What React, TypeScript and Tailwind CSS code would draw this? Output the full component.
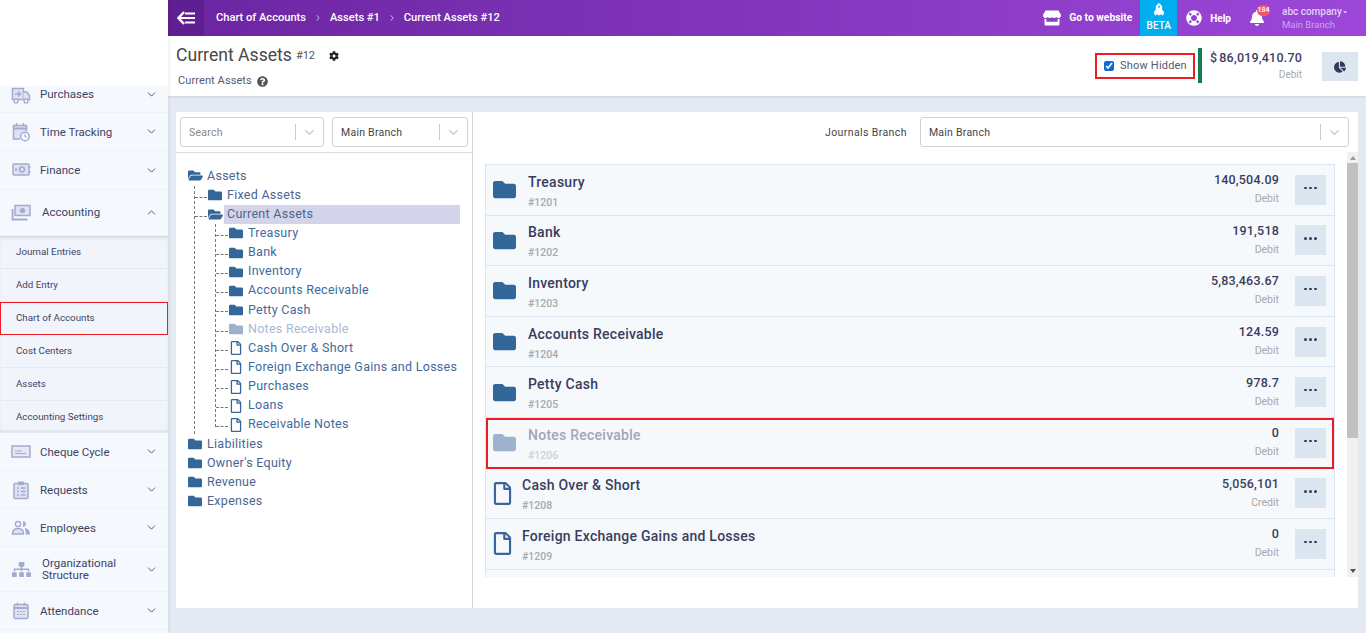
import { ChevronDown, ChevronUp, ChevronRight } from 'lucide-react'
import { FaFolder, FaFolderOpen, FaRegFile, FaCog, FaQuestionCircle, FaStore, FaRocket, FaLifeRing, FaBell, FaChartPie, FaCaretDown, FaSitemap } from 'react-icons/fa'

const iconColor = '#a3abd2'
const iconFill = '#dfe2f0'

function TruckIcon() {
  return (
    <svg width="20" height="20" viewBox="0 0 20 20" fill="none">
      <path d="M1.5 2.5h11v11h-11z" fill={iconFill} stroke={iconColor} strokeWidth="1.5" />
      <path d="M12.5 6h3.5l2.5 3.5v4h-6" fill={iconFill} stroke={iconColor} strokeWidth="1.5" />
      <path d="M4 8h5M7 5.5 9.5 8 7 10.5" stroke={iconColor} strokeWidth="1.3" />
      <circle cx="5" cy="15" r="1.9" fill="white" stroke={iconColor} strokeWidth="1.4" />
      <circle cx="15" cy="15" r="1.9" fill="white" stroke={iconColor} strokeWidth="1.4" />
    </svg>
  )
}

function CalendarClockIcon() {
  return (
    <svg width="20" height="20" viewBox="0 0 20 20" fill="none">
      <path d="M9 17H2.5V3.5h13V9" fill={iconFill} stroke={iconColor} strokeWidth="1.5" />
      <path d="M2.5 6.5h13" stroke={iconColor} strokeWidth="2" />
      <path d="M5.5 1v3.5M12.5 1v3.5" stroke={iconColor} strokeWidth="1.5" />
      <circle cx="14" cy="14.5" r="4.2" fill="white" stroke={iconColor} strokeWidth="1.5" />
      <path d="M14 12v2.7l2 .8" stroke={iconColor} strokeWidth="1.2" />
    </svg>
  )
}

function SafeIcon() {
  return (
    <svg width="20" height="20" viewBox="0 0 20 20" fill="none">
      <rect x="2" y="4" width="16" height="11" rx="1" fill={iconFill} stroke={iconColor} strokeWidth="1.5" />
      <circle cx="11" cy="9.5" r="2.5" stroke={iconColor} strokeWidth="1.5" />
      <path d="M5 8v3M18 7h1.5M18 12h1.5" stroke={iconColor} strokeWidth="1.5" />
    </svg>
  )
}

function MoneyIcon() {
  return (
    <svg width="20" height="20" viewBox="0 0 20 20" fill="none">
      <rect x="4" y="2.5" width="15" height="10" fill={iconFill} stroke={iconColor} strokeWidth="1.5" />
      <circle cx="11.5" cy="7.5" r="2.6" fill={iconColor} />
      <path d="M1.5 6v10.5h15" stroke={iconColor} strokeWidth="1.8" />
    </svg>
  )
}

function ChequeIcon() {
  return (
    <svg width="20" height="20" viewBox="0 0 20 20" fill="none">
      <rect x="1" y="4" width="18" height="11" fill="#e6e8f3" stroke={iconColor} strokeWidth="1.5" />
      <path d="M4 9h7M4 11.5h11" stroke={iconColor} strokeWidth="1" />
    </svg>
  )
}

function ClipboardIcon() {
  return (
    <svg width="20" height="20" viewBox="0 0 20 20" fill="none">
      <rect x="3" y="3.5" width="14" height="15" rx="1" fill={iconFill} stroke={iconColor} strokeWidth="1.5" />
      <rect x="7" y="1.5" width="6" height="3.5" rx="1" fill={iconColor} />
      <path d="M6 8h2M6 11.5h2M6 15h2M10 8h4.5M10 11.5h4.5M10 15h4.5" stroke={iconColor} strokeWidth="1.3" />
    </svg>
  )
}

function PeopleIcon() {
  return (
    <svg width="20" height="20" viewBox="0 0 20 20" fill="none">
      <circle cx="7" cy="6" r="2.6" fill="white" stroke={iconColor} strokeWidth="1.5" />
      <path d="M12.5 3.5a2.7 2.7 0 0 1 0 5.2z" fill={iconColor} stroke={iconColor} strokeWidth="1" />
      <path d="M1.5 16c0-3.6 2.4-5.5 5.5-5.5s5.5 1.9 5.5 5.5z" fill={iconFill} stroke={iconColor} strokeWidth="1.5" />
      <path d="M14 10.5c2.6.3 4.5 2.2 4.5 5.5H15" fill={iconColor} stroke={iconColor} strokeWidth="1" />
    </svg>
  )
}

function CalendarIcon() {
  return (
    <svg width="20" height="20" viewBox="0 0 20 20" fill="none">
      <rect x="3" y="3.5" width="14" height="14" rx="1.5" fill={iconFill} stroke={iconColor} strokeWidth="1.5" />
      <path d="M3 7h14" stroke={iconColor} strokeWidth="2" />
      <path d="M6.5 1.5v3M13.5 1.5v3" stroke={iconColor} strokeWidth="1.5" />
      <path d="M6 10.5h2M9 10.5h2M12 10.5h2M6 13.5h2M9 13.5h2M12 13.5h2" stroke={iconColor} strokeWidth="1.2" />
    </svg>
  )
}

function BackIcon() {
  return (
    <svg width="18" height="14" viewBox="0 0 18 14" fill="none">
      <path d="M7 1L1.5 7 7 13" stroke="white" strokeWidth="2.4" />
      <path d="M3 7h15M8 2.5h10M8 11.5h10" stroke="white" strokeWidth="2" />
    </svg>
  )
}

function SideRow({ icon, label, open, short, height }: { icon: React.ReactNode; label: React.ReactNode; open?: boolean; short?: boolean; height?: string }) {
  return (
    <div className={`flex border-b border-[#eef1f6] pl-[11px] pr-[10px] text-[11.5px] text-[#3d4267] ${short ? 'items-start overflow-hidden' : 'items-center'} ${height ?? 'h-[38px]'}`}>
      <span className="flex w-[20px] shrink-0 items-center justify-center">{icon}</span>
      <span className={`flex-1 leading-[12px] ${open ? 'ml-[11px] pb-[2px]' : 'ml-[9px]'} ${short ? 'mt-[2px]' : ''}`}>{label}</span>
      {open ? <ChevronUp size={13} strokeWidth={1.6} color="#3d4267" /> : <ChevronDown size={13} strokeWidth={1.6} color="#3d4267" className={short ? 'mt-[2px]' : ''} />}
    </div>
  )
}

const subItems = ['Journal Entries', 'Add Entry', 'Chart of Accounts', 'Cost Centers', 'Assets', 'Accounting Settings']

function Sidebar() {
  return (
    <aside className="z-10 flex h-full w-[168px] shrink-0 flex-col bg-[#f5f8fc] shadow-[1px_0_3px_rgba(0,0,0,0.08)]">
      <div className="h-[86px] shrink-0 bg-white" />
      <SideRow short height="h-[27px]" icon={<TruckIcon />} label="Purchases" />
      <SideRow icon={<CalendarClockIcon />} label="Time Tracking" />
      <SideRow height="h-[39px]" icon={<SafeIcon />} label="Finance" />
      <SideRow open height="h-[46px]" icon={<MoneyIcon />} label="Accounting" />
      <div className="bg-[#f1f4fa] shadow-[inset_0_4px_4px_-3px_rgba(0,0,0,0.16),inset_0_-4px_4px_-3px_rgba(0,0,0,0.16)]">
        {subItems.map((s) => (
          <div
            key={s}
            className={`flex items-center text-[9.75px] text-[#3d4267] ${s === 'Accounting Settings' ? 'h-[32px] pt-[1px]' : 'h-[33px]'} ${s === 'Chart of Accounts' ? 'border border-[#ed1c24] pl-[15px]' : 'border-b border-[#e6e9f1] pl-[16px]'}`}
          >
            {s}
          </div>
        ))}
      </div>
      <SideRow icon={<ChequeIcon />} label="Cheque Cycle" />
      <SideRow icon={<ClipboardIcon />} label="Requests" />
      <SideRow icon={<PeopleIcon />} label="Employees" />
      <div className="flex h-[45px] items-center border-b border-[#eef1f6] pl-[11px] pr-[10px] text-[11.5px] text-[#3d4267]">
        <span className="flex w-[20px] shrink-0 justify-center"><FaSitemap size={19} color={iconColor} /></span>
        <span className="ml-[11px] flex-1 leading-[12px]">Organizational<br />Structure</span>
        <ChevronDown size={13} strokeWidth={1.6} color="#3d4267" />
      </div>
      <SideRow icon={<CalendarIcon />} label="Attendance" />
    </aside>
  )
}

function TopBar() {
  return (
    <header className="flex h-[36px] shrink-0 items-center bg-gradient-to-r from-[#6b25a1] to-[#9c47d9] text-white">
      <div className="flex h-full w-[36px] items-center justify-center bg-[#5f1f90]"><BackIcon /></div>
      <nav className="ml-[12px] flex items-center text-[11.1px] font-medium">
        <span>Chart of Accounts</span>
        <ChevronRight size={10} className="mx-[7px] opacity-80" />
        <span>Assets #1</span>
        <ChevronRight size={10} className="mx-[7px] opacity-80" />
        <span>Current Assets #12</span>
      </nav>
      <div className="ml-auto flex h-full items-center">
        <FaStore size={18} />
        <span className="ml-[8px] text-[10.3px] font-bold">Go to website</span>
        <div className="ml-[8px] flex h-full w-[37px] flex-col items-center justify-center bg-[#00aeef]">
          <FaRocket size={12} className="-rotate-45" />
          <span className="mt-[3px] text-[10px] font-medium leading-[12px]">BETA</span>
        </div>
        <FaLifeRing size={16} className="ml-[9px]" />
        <span className="ml-[8px] text-[10px] font-bold">Help</span>
        <div className="relative ml-[18px]">
          <FaBell size={16} />
          <span className="absolute -right-[5px] -top-[5px] flex h-[11px] w-[13px] items-center justify-center rounded-full bg-[#f2566e] text-[7px] font-medium">184</span>
        </div>
        <div className="ml-[17px] mr-[19px] flex w-[65px] flex-col">
          <span className="flex items-center whitespace-nowrap text-[10px] font-medium leading-[12px] text-[#e3d0f5]">abc company <FaCaretDown size={8} className="ml-[1px]" /></span>
          <span className="mt-[1px] whitespace-nowrap text-[9.5px] leading-[12px] text-[#c9a6ea]">Main Branch</span>
        </div>
      </div>
    </header>
  )
}

function PageHeader() {
  return (
    <div className="flex h-[61px] shrink-0 items-start border-b border-[#d5dbe5] bg-white pl-[8px] pr-[8px] shadow-[0_1px_2px_rgba(0,0,0,0.05)]">
      <div>
        <div className="mt-[7px] flex items-center text-[#484848]">
          <span className="text-[17.6px] leading-[24px]">Current Assets</span>
          <span className="ml-[4px] mt-[3px] text-[11px] text-[#555]">#12</span>
          <FaCog size={10} color="#222" className="ml-[14px] mt-[2px]" />
        </div>
        <div className="ml-[2px] mt-[6px] flex items-center text-[11px] tracking-[0.1px] text-[#565b72]">
          Current Assets
          <FaQuestionCircle size={11} color="#555" className="ml-[5px]" />
        </div>
      </div>
      <div className="ml-auto flex items-start">
        <label className="mt-[17px] flex h-[26px] w-[100px] items-center border-2 border-[#ed1c24] pl-[7px] text-[11px] tracking-[0.2px] text-[#555a70]">
          <input type="checkbox" defaultChecked className="h-[10px] w-[10px] accent-[#0b6cd6]" />
          <span className="ml-[6px]">Show Hidden</span>
        </label>
        <div className="ml-[3px] mt-[12px] h-[35px] w-[4px] bg-[#0f7f56]" />
        <div className="ml-[8px] mt-[14px] flex w-[92px] flex-col items-end">
          <span className="whitespace-nowrap text-[12.5px] font-medium leading-[16px] tracking-[0.2px] text-[#3d3f5c]"><span className="mr-[2px]">$</span>86,019,410.70</span>
          <span className="mt-[3px] text-[10px] leading-[12px] text-[#a8a8a8]">Debit</span>
        </div>
        <div className="ml-[20px] mt-[16px] flex h-[29px] w-[36px] items-center justify-center bg-[#dce6f1]">
          <FaChartPie size={12} color="#33385c" />
        </div>
      </div>
    </div>
  )
}

function SelectBox({ label, className, muted }: { label: string; className: string; muted?: boolean }) {
  return (
    <div className={`flex h-[30px] items-center rounded-[3px] border border-[#d2d2d2] bg-white pl-[8px] text-[10.5px] tracking-[0.25px] ${muted ? 'text-[#888]' : 'text-[#444]'} ${className}`}>
      <span className="flex-1 pt-[2px]">{label}</span>
      <span className="h-[16px] w-px bg-[#ccc]" />
      <ChevronDown size={15} color="#c4c4c4" className="mx-[6px]" />
    </div>
  )
}

const depthPad = ['pl-[12px]', 'pl-[32px]', 'pl-[53px]']

function TreeRow({ label, depth, kind, muted, selected }: { label: string; depth: number; kind: 'closed' | 'open' | 'file'; muted?: boolean; selected?: boolean }) {
  const color = muted ? '#9db3cd' : '#336699'
  return (
    <div className={`relative flex h-[19.15px] items-center whitespace-nowrap text-[12.5px] tracking-[0.27px] ${depthPad[depth]} ${muted ? 'text-[#a9b8cf]' : depth === 2 ? 'text-[#3f6a9c]' : 'text-[#4a6690]'}`}>
      {depth > 0 && <span className={`absolute top-[11px] border-t border-dashed border-[#777] ${depth === 1 ? 'left-[19px] w-[12px]' : 'left-[40px] w-[12px]'}`} />}
      {kind === 'file' ? (
        <span className="mr-[5px] flex w-[14px] justify-center"><FaRegFile size={14} color="#3c659b" /></span>
      ) : kind === 'open' ? (
        <FaFolderOpen size={15} color={color} className="mr-[4px] w-[15px]" />
      ) : (
        <FaFolder size={14} color={color} className="mr-[5px] w-[14px]" />
      )}
      <span className={selected ? 'ml-[-3px] flex h-[19px] w-[236px] items-center bg-[#d3d4ea] pl-[3px]' : ''}>{label}</span>
    </div>
  )
}

function Tree() {
  return (
    <div className="pt-[13.4px]">
      <TreeRow label="Assets" depth={0} kind="open" />
      <div className="relative">
        <span className="absolute top-0 bottom-0 left-[18px] border-l border-dashed border-[#777]" />
        <TreeRow label="Fixed Assets" depth={1} kind="closed" />
        <TreeRow label="Current Assets" depth={1} kind="open" selected />
        <div className="relative">
          <span className="absolute top-0 bottom-[7px] left-[39px] border-l border-dashed border-[#777]" />
          <TreeRow label="Treasury" depth={2} kind="closed" />
          <TreeRow label="Bank" depth={2} kind="closed" />
          <TreeRow label="Inventory" depth={2} kind="closed" />
          <TreeRow label="Accounts Receivable" depth={2} kind="closed" />
          <TreeRow label="Petty Cash" depth={2} kind="closed" />
          <TreeRow label="Notes Receivable" depth={2} kind="closed" muted />
          <TreeRow label="Cash Over & Short" depth={2} kind="file" />
          <TreeRow label="Foreign Exchange Gains and Losses" depth={2} kind="file" />
          <TreeRow label="Purchases" depth={2} kind="file" />
          <TreeRow label="Loans" depth={2} kind="file" />
          <TreeRow label="Receivable Notes" depth={2} kind="file" />
        </div>
      </div>
      <TreeRow label="Liabilities" depth={0} kind="closed" />
      <TreeRow label="Owner's Equity" depth={0} kind="closed" />
      <TreeRow label="Revenue" depth={0} kind="closed" />
      <TreeRow label="Expenses" depth={0} kind="closed" />
    </div>
  )
}

const accounts = [
  { name: 'Treasury', code: '#1201', amount: '140,504.09', type: 'Debit', kind: 'folder' },
  { name: 'Bank', code: '#1202', amount: '191,518', type: 'Debit', kind: 'folder' },
  { name: 'Inventory', code: '#1203', amount: '5,83,463.67', type: 'Debit', kind: 'folder' },
  { name: 'Accounts Receivable', code: '#1204', amount: '124.59', type: 'Debit', kind: 'folder' },
  { name: 'Petty Cash', code: '#1205', amount: '978.7', type: 'Debit', kind: 'folder' },
  { name: 'Notes Receivable', code: '#1206', amount: '0', type: 'Debit', kind: 'folder', hidden: true },
  { name: 'Cash Over & Short', code: '#1208', amount: '5,056,101', type: 'Credit', kind: 'file' },
  { name: 'Foreign Exchange Gains and Losses', code: '#1209', amount: '0', type: 'Debit', kind: 'file' },
]

function AccountRow({ a }: { a: (typeof accounts)[number] }) {
  return (
    <div className={`flex h-[50.6px] shrink-0 items-center border-b border-[#dbe6f2] bg-[#f5f9fc] pr-[8px] ${a.hidden ? 'relative z-10 outline-2 -outline-offset-2 outline-[#ed1c24]' : ''}`}>
      {a.kind === 'folder' ? (
        <span className="ml-[7px] flex w-[35px] shrink-0"><FaFolder size={23} color={a.hidden ? '#9db3cd' : '#336699'} /></span>
      ) : (
        <span className="ml-[5px] flex w-[31px] shrink-0"><FaRegFile size={23} color="#3c659b" /></span>
      )}
      <div className="flex-1 pt-[3px]">
        <div className={`text-[14px] font-medium leading-[18px] tracking-[0.25px] ${a.hidden ? 'text-[#a3a5ba]' : 'text-[#3b3c5e]'}`}>{a.name}</div>
        <div className={`mt-[5px] text-[10.5px] font-medium leading-[14px] ${a.hidden ? 'text-[#d0d0d0]' : 'text-[#a8a8a8]'}`}>{a.code}</div>
      </div>
      <div className="mb-[2px] flex flex-col items-end">
        <span className="text-[12.5px] font-medium leading-[18px] tracking-[0.2px] text-[#3b3c5e]">{a.amount}</span>
        <span className="mt-[3px] text-[10.5px] leading-[14px] text-[#a8a8a8]">{a.type}</span>
      </div>
      <div className="ml-[16px] flex h-[30px] w-[31px] shrink-0 items-center justify-center gap-[2.5px] bg-[#dce6f1] pb-[4px]">
        <span className="h-[2.5px] w-[2.5px] rounded-full bg-[#33385c]" />
        <span className="h-[2.5px] w-[2.5px] rounded-full bg-[#33385c]" />
        <span className="h-[2.5px] w-[2.5px] rounded-full bg-[#33385c]" />
      </div>
    </div>
  )
}

function Scrollbar() {
  return (
    <div className="flex h-[425px] w-[11px] flex-col items-center bg-[#f1f1f1]">
      <div className="mt-[4px] h-0 w-0 border-x-[3px] border-b-[4px] border-x-transparent border-b-[#9a9a9a]" />
      <div className="mt-[3px] h-[275px] w-full bg-[#c1c1c1]" />
      <div className="mt-auto mb-[4px] h-0 w-0 border-x-[3px] border-t-[4px] border-x-transparent border-t-[#505050]" />
    </div>
  )
}

export default function App() {
  return (
    <div className="flex h-screen w-full overflow-hidden bg-[#e4eaf3] font-['Roboto',sans-serif]">
      <Sidebar />
      <div className="flex min-w-0 flex-1 flex-col">
        <TopBar />
        <PageHeader />
        <main className="mx-[8px] mt-[15px] flex h-[496px] bg-white">
          <section className="w-[297px] shrink-0 border-r border-[#ced3dd]">
            <div className="flex h-[41px] items-center gap-[8px] border-b border-[#dcdcdc] pl-[4px] pr-[4px]">
              <SelectBox label="Search" muted className="w-[144px]" />
              <SelectBox label="Main Branch" className="w-[136px]" />
            </div>
            <Tree />
          </section>
          <section className="min-w-0 flex-1">
            <div className="flex h-[40px] items-center pl-[352px] pr-[9px]">
              <span className="pt-[2px] text-[10.5px] tracking-[0.4px] text-[#444]">Journals Branch</span>
              <SelectBox label="Main Branch" className="ml-[13px] flex-1" />
            </div>
            <div className="flex items-start pl-[12px]">
              <div className="mt-[12px] flex h-[413px] flex-1 flex-col overflow-hidden border-x border-t border-[#dbe6f2]">
                {accounts.map((a) => (
                  <AccountRow key={a.code} a={a} />
                ))}
                <div className="flex-1 bg-[#f5f9fc]" />
              </div>
              <div className="ml-[12px]"><Scrollbar /></div>
            </div>
          </section>
        </main>
      </div>
    </div>
  )
}
